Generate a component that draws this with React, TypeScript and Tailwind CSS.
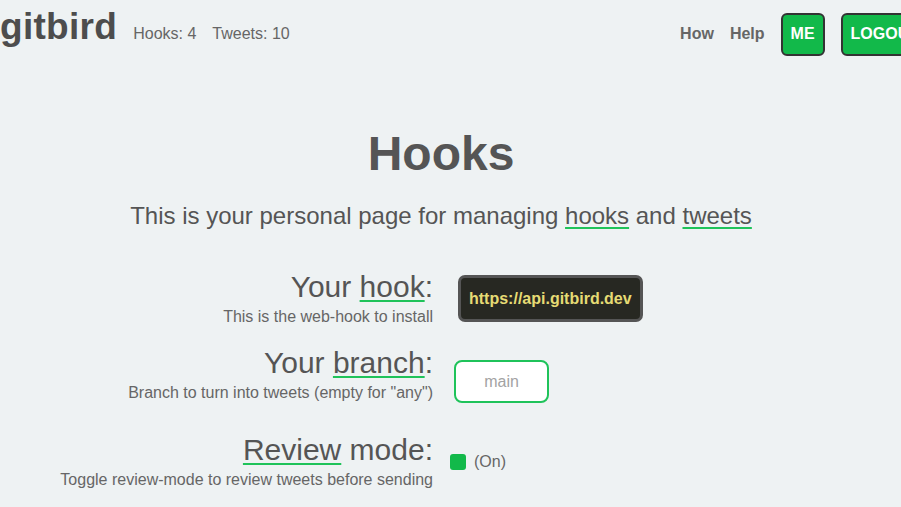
import React from "react";

const Link = ({ children }: { children: React.ReactNode }) => (
	<a className="underline decoration-[#1fc35a] decoration-2 underline-offset-[3px]">
		{children}
	</a>
);

const Row = ({
	label,
	hint,
	className,
	children,
}: {
	label: React.ReactNode;
	hint: string;
	className?: string;
	children: React.ReactNode;
}) => (
	<div className={"grid grid-cols-2 gap-x-4 " + (className ?? "")}>
		<div className="text-right">
			<div className="text-[30px] leading-[36px] text-[#555]">{label}</div>
			<div className="text-base leading-6 text-[#666]">{hint}</div>
		</div>
		<div className="flex items-center">{children}</div>
	</div>
);

export default function App() {
	return (
		<div
			className="min-h-screen w-full overflow-hidden bg-[#eef2f3]"
			style={{ fontFamily: '"Liberation Sans", Arial, sans-serif' }}
		>
			<header className="flex w-[945px] items-baseline pt-[8px] pr-4">
				<span className="text-[37px] font-bold leading-none tracking-[0.3px] text-[#4d4d4d]">
					gitbird
				</span>
				<span className="ml-4 text-base text-[#666]">Hooks: 4</span>
				<span className="ml-4 text-base text-[#666]">Tweets: 10</span>

				<nav className="ml-auto flex items-baseline gap-4">
					<a className="text-base font-bold text-[#666]">How</a>
					<a className="text-base font-bold text-[#666]">Help</a>
					<button className="flex h-[43px] items-center rounded-md border-2 border-[#333] bg-[#12b94a] px-2 text-base font-bold text-white">
						ME
					</button>
					<button className="flex h-[43px] items-center rounded-md border-2 border-[#333] bg-[#12b94a] px-2 text-base font-bold text-white">
						LOGOUT
					</button>
				</nav>
			</header>

			<main className="w-[882px]">
				<h1 className="mt-[74px] text-center text-5xl font-bold leading-none text-[#555]">
					Hooks
				</h1>
				<p className="mt-[22px] text-center text-2xl leading-8 text-[#555]">
					This is your personal page for managing <Link>hooks</Link> and{" "}
					<Link>tweets</Link>
				</p>

				<Row
					className="mt-[37px]"
					label={
						<>
							Your <Link>hook</Link>:
						</>
					}
					hint="This is the web-hook to install"
				>
					<div className="ml-[9px] rounded-[7px] border-[3px] border-[#555] bg-[#272822] px-2 py-[8.5px] text-base font-bold leading-6 text-[#e6db74]">
						https://api.gitbird.dev
					</div>
				</Row>

				<Row
					className="mt-4"
					label={
						<>
							Your <Link>branch</Link>:
						</>
					}
					hint={'Branch to turn into tweets (empty for "any")'}
				>
					<input
						placeholder="main"
						className="mt-[14px] ml-[5px] h-[43px] w-[95px] rounded-lg border-2 border-[#1fc35a] bg-white text-center text-base text-[#555] placeholder:text-[#a3a3a3] outline-none"
					/>
				</Row>

				<Row
					className="mt-[27px]"
					label={
						<>
							<Link>Review</Link> mode:
						</>
					}
					hint="Toggle review-mode to review tweets before sending"
				>
					<span className="ml-[1px] h-4 w-4 rounded-[3px] bg-[#12b94a]" />
					<span className="ml-2 text-base text-[#666]">(On)</span>
				</Row>
			</main>
		</div>
	);
}
